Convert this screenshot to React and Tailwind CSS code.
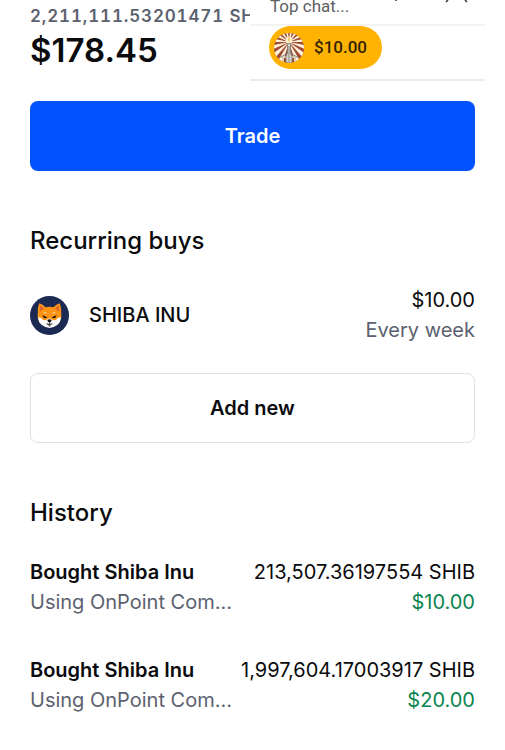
const history = [
  { id: 1, title: 'Bought Shiba Inu', source: 'Using OnPoint Com...', amount: '213,507.36197554 SHIB', value: '$10.00' },
  { id: 2, title: 'Bought Shiba Inu', source: 'Using OnPoint Com...', amount: '1,997,604.17003917 SHIB', value: '$20.00' },
]

const rays = [12, 36, 60, 84, 108, 132, 156, 204, 228, 252, 276, 300, 324, 348]

function ShibaIcon() {
  return (
    <svg viewBox="0 0 40 40" className="w-[39px] h-[39px] shrink-0" aria-hidden="true">
      <circle cx="20" cy="20" r="20" fill="#1b2a52" />
      <path d="M9.5 7.5 Q13 8.5 16 11.5 Q20 10.300 24 11.500 Q27 8.500 30.500 7.500 Q32.500 12 32 18 Q33 24 29 28.500 L25 31 H15 L11 28.500 Q7 24 8 18 Q7.500 12 9.500 7.500Z" fill="#ff9414" />
      <path d="M10.500 9.500 L14.500 12.500 L10 16.500Z M29.500 9.500 L25.500 12.500 L30 16.500Z" fill="#e0672f" />
      <path d="M8.500 21.500 Q11.500 22 13.500 24.500 Q17 25.500 18 23.500 Q20 22.500 22 23.500 Q23 25.500 26.500 24.500 Q28.500 22 31.500 21.500 Q32 26.500 27.500 30 Q20 35.500 12.500 30 Q8 26.500 8.500 21.500Z" fill="#fff" />
      <path d="M13.500 17.500 Q15.500 15.500 17.500 18 Z M26.500 17.500 Q24.500 15.500 22.500 18Z" fill="#ffe9cc" />
      <path d="M12.500 19.500 L18 22 L14.500 22.800Z M27.500 19.500 L22 22 L25.500 22.800Z" fill="#111" />
      <path d="M17.800 24.500 Q20 23.300 22.200 24.500 Q22.200 26.800 20 27.300 Q17.800 26.800 17.800 24.500Z" fill="#111" />
      <path d="M20 27 V28.500 M17 28.500 Q20 30 23 28.500 M19 30.500 H21" fill="none" stroke="#111" strokeWidth="1" />
    </svg>
  )
}

function ChatAvatar() {
  return (
    <svg viewBox="0 0 30 30" className="w-[30px] h-[30px] shrink-0" aria-hidden="true">
      <defs>
        <clipPath id="avatar">
          <circle cx="15" cy="15" r="15" />
        </clipPath>
      </defs>
      <g clipPath="url(#avatar)">
        <rect width="30" height="30" fill="#a04a34" />
        {rays.map((angle) => (
          <path key={angle} d="M15 9 L12.200 -16 H17.800Z" fill="#fff3dc" transform={`rotate(${angle} 15 9)`} />
        ))}
        <circle cx="15" cy="7" r="3.500" fill="#fff0cc" />
        <path d="M15 3.500 Q17 6.500 15 9 Q13 6.500 15 3.500Z" fill="#f2bd69" />
        <path d="M6 23 H24 V25 H6Z" fill="#d9cfba" />
        <path d="M8 24 H10 V30 H8Z M20 24 H22 V30 H20Z" fill="#d9cfba" />
        <path d="M13.500 10.500 H16.500 V20 L18 23 V30 H12 V23 L13.500 20Z" fill="#d6d3c8" stroke="#77766f" strokeWidth=".8" />
        <path d="M6 24 Q12 22.500 13 19 M24 24 Q18 22.500 17 19 M15 13 V29" fill="none" stroke="#77766f" strokeWidth=".8" />
      </g>
    </svg>
  )
}

function TopChat() {
  return (
    <aside className="absolute top-0 left-[250px] right-5 bg-white font-['Roboto',sans-serif]">
      <div className="flex h-[26px] justify-between border-b-2 border-[#f3f3f3] pl-5 pr-[17px]">
        <p className="-mt-1 text-[17px] leading-5 text-[#606060]">Top chat...</p>
        <svg viewBox="0 0 73 3" className="h-[3px] w-[73px]" aria-hidden="true">
          <path d="M1 0 V1 M53 0 L51 2 M70 0 L72 2" stroke="#333" strokeWidth="1.5" />
        </svg>
      </div>
      <div className="h-[55px] border-b-2 border-[#ececec] pl-[19px]">
        <button className="flex h-[43px] w-[113px] items-center gap-[10px] rounded-full bg-[#ffb300] pl-[5px] text-[17px] font-medium text-[#332400]">
          <ChatAvatar />
          $10.00
        </button>
      </div>
    </aside>
  )
}

export default function App() {
  return (
    <div className="relative overflow-hidden bg-white px-[30px] pb-9 font-['Inter',sans-serif] text-[#0a0b0d]">
      <header className="pt-1">
        <p className="whitespace-nowrap text-[17px] leading-6 font-semibold tabular-nums tracking-wider text-[#5b616e]">2,211,111.53201471 SH</p>
        <h1 className="text-[33px] leading-11 font-semibold">$178.45</h1>
      </header>
      <TopChat />

      <button className="mt-[29px] h-[70px] w-full rounded-lg bg-[#0052ff] text-xl font-semibold text-white">Trade</button>

      <section className="mt-[54px]">
        <h2 className="text-2xl leading-8 font-medium">Recurring buys</h2>
        <div className="mt-7 flex items-center gap-5">
          <ShibaIcon />
          <p className="text-xl font-medium">SHIBA INU</p>
          <div className="ml-auto text-right text-xl leading-[30px]">
            <p>$10.00</p>
            <p className="text-[#5b616e]">Every week</p>
          </div>
        </div>
        <button className="mt-7 h-[70px] w-full rounded-lg border border-[#dfe0e3] text-xl font-semibold">Add new</button>
      </section>

      <section className="mt-[54px]">
        <h2 className="text-2xl leading-8 font-medium">History</h2>
        <ul className="mt-7 flex flex-col gap-[38px]">
          {history.map((item) => (
            <li key={item.id} className="flex justify-between text-xl leading-[30px]">
              <div className="whitespace-nowrap">
                <p className="font-semibold">{item.title}</p>
                <p className="text-[#5b616e]">{item.source}</p>
              </div>
              <div className="text-right">
                <p>{item.amount}</p>
                <p className="text-[#098551]">{item.value}</p>
              </div>
            </li>
          ))}
        </ul>
      </section>
    </div>
  )
}
